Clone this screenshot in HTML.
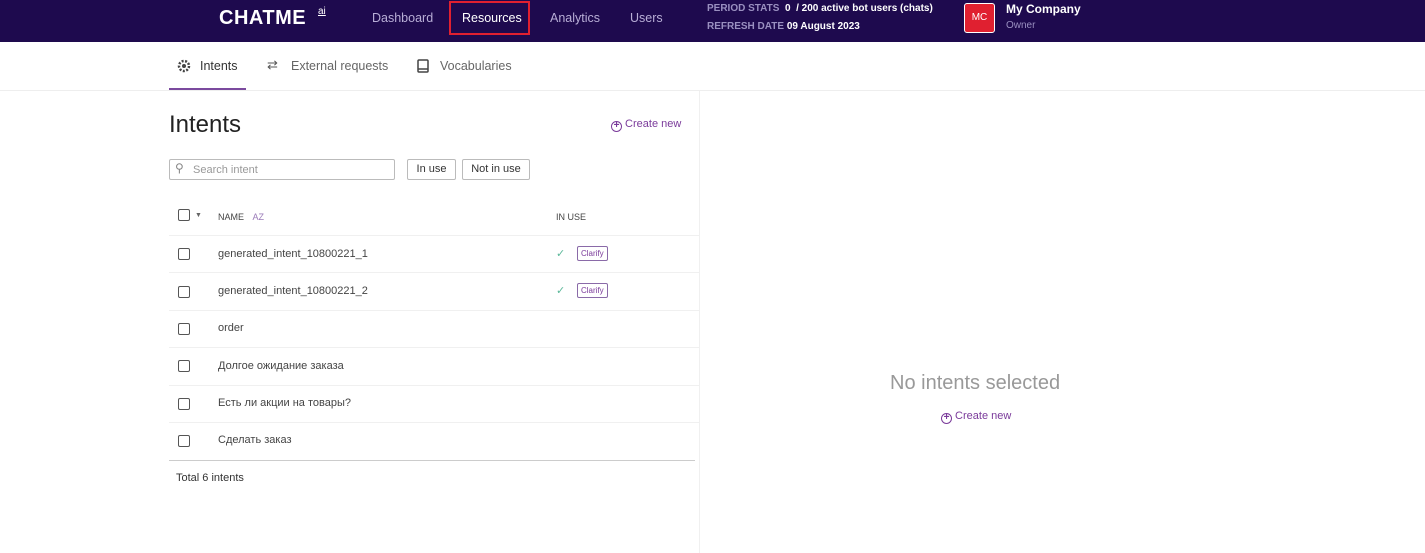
<!DOCTYPE html>
<html><head><meta charset="utf-8"><style>
*{margin:0;padding:0;box-sizing:border-box}
body{width:1425px;height:553px;background:#fff;font-family:"Liberation Sans",sans-serif;position:relative;overflow:hidden;color:#333}
.a{position:absolute;white-space:nowrap}
.nav{position:absolute;left:0;top:0;width:1425px;height:42px;background:#1e0a4e}
.navt{color:#b8aed6;font-size:12.5px}
.cb{position:absolute;width:12px;height:12px;border:1.5px solid #555;border-radius:2px}
.row{font-size:11px;color:#444}
.sep{position:absolute;left:169px;width:530px;height:1px;background:#f0f0f0}
.cl{position:absolute;font-size:8px;color:#7a3a9a;border:1px solid #8a6aa8;border-radius:2px;padding:1px 3px;line-height:11px}
.ck{position:absolute;color:#5cb89a;font-size:11px}
</style></head><body>
<div class="nav"></div>
<div class="a" style="left:219px;top:7px;color:#fff;font-size:20px;font-weight:bold;letter-spacing:0.5px">CHATME</div>
<div class="a" style="left:318px;top:6px;color:#fff;font-size:10px;text-decoration:underline">ai</div>
<div class="a navt" style="left:372px;top:11px">Dashboard</div>
<div class="a" style="left:449px;top:1px;width:81px;height:34px;border:2px solid #e02030"></div>
<div class="a" style="left:462px;top:11px;color:#fff;font-size:12.5px">Resources</div>
<div class="a navt" style="left:550px;top:11px">Analytics</div>
<div class="a navt" style="left:630px;top:11px">Users</div>
<div class="a" style="left:707px;top:3px;font-size:10px;color:#9a90c0;font-weight:bold">PERIOD STATS <span style="color:#fff">&nbsp;0 &nbsp;/ 200 active bot users (chats)</span></div>
<div class="a" style="left:707px;top:21px;font-size:10px;color:#9a90c0;font-weight:bold">REFRESH DATE <span style="color:#fff">09 August 2023</span></div>
<div class="a" style="left:964px;top:3px;width:31px;height:30px;background:#e02030;border:1.5px solid #fff;border-radius:3px;color:#fff;font-size:10px;text-align:center;line-height:27px">MC</div>
<div class="a" style="left:1006px;top:2px;color:#fff;font-size:12px;font-weight:bold">My Company</div>
<div class="a" style="left:1006px;top:20px;color:#9a90c0;font-size:10px">Owner</div>

<svg class="a" style="left:177px;top:59px" width="14" height="14" viewBox="0 0 14 14"><circle cx="7" cy="7" r="5" fill="none" stroke="#444" stroke-width="2.5" stroke-dasharray="2 1.5"/><circle cx="7" cy="7" r="2" fill="#444"/></svg>
<div class="a" style="left:200px;top:59px;font-size:12.5px;color:#333">Intents</div>
<div class="a" style="left:169px;top:88px;width:77px;height:3px;background:#7b4a9e"></div>
<div class="a" style="left:267px;top:57px;font-size:13px;color:#555">⇄</div>
<div class="a" style="left:291px;top:59px;font-size:12.5px;color:#666">External requests</div>
<svg class="a" style="left:417px;top:59px" width="12" height="14" viewBox="0 0 12 14"><rect x="1" y="1" width="10" height="12" rx="1" fill="none" stroke="#444" stroke-width="1.5"/><line x1="1" y1="10" x2="11" y2="10" stroke="#444" stroke-width="1.5"/></svg>
<div class="a" style="left:440px;top:59px;font-size:12.5px;color:#666">Vocabularies</div>
<div class="a" style="left:0;top:90px;width:1425px;height:1px;background:#eee"></div>
<div class="a" style="left:699px;top:91px;width:1px;height:462px;background:#f0f0f0"></div>

<div class="a" style="left:169px;top:111px;font-size:24px;color:#222">Intents</div>
<div class="a" style="left:611px;top:118px;font-size:11px;color:#7a3a9a"><span style="display:inline-block;width:11px;height:11px;border:1.5px solid #7a3a9a;border-radius:50%;text-align:center;line-height:8px;font-size:10px;font-weight:bold;vertical-align:-1px">+</span> Create new</div>

<div class="a" style="left:169px;top:159px;width:226px;height:21px;border:1px solid #bbb;border-radius:2px"></div>
<div class="a" style="left:175px;top:161px;font-size:12px;color:#888">⚲</div>
<div class="a" style="left:193px;top:164px;font-size:11px;color:#999">Search intent</div>
<div class="a" style="left:407px;top:159px;width:49px;height:21px;border:1px solid #bbb;border-radius:2px;font-size:11px;text-align:center;line-height:19px;color:#333">In use</div>
<div class="a" style="left:462px;top:159px;width:68px;height:21px;border:1px solid #bbb;border-radius:2px;font-size:11px;text-align:center;line-height:19px;color:#333">Not in use</div>

<div class="cb" style="left:178px;top:209px"></div>
<div class="a" style="left:195px;top:212px;font-size:7px;color:#666">▼</div>
<div class="a" style="left:218px;top:212px;font-size:9px;color:#444">NAME <span style="color:#9a7ab8;margin-left:6px">A͘Z</span></div>
<div class="a" style="left:556px;top:212px;font-size:9px;color:#444">IN USE</div>
<div class="sep" style="top:235px"></div>

<div class="cb" style="left:178px;top:248px"></div><div class="a row" style="left:218px;top:248px">generated_intent_10800221_1</div>
<div class="ck" style="left:556px;top:247px">✓</div><div class="cl" style="left:577px;top:246px">Clarify</div>
<div class="sep" style="top:272px"></div>
<div class="cb" style="left:178px;top:286px"></div><div class="a row" style="left:218px;top:285px">generated_intent_10800221_2</div>
<div class="ck" style="left:556px;top:284px">✓</div><div class="cl" style="left:577px;top:283px">Clarify</div>
<div class="sep" style="top:310px"></div>
<div class="cb" style="left:178px;top:323px"></div><div class="a row" style="left:218px;top:322px">order</div>
<div class="sep" style="top:347px"></div>
<div class="cb" style="left:178px;top:360px"></div><div class="a row" style="left:218px;top:360px">Долгое ожидание заказа</div>
<div class="sep" style="top:385px"></div>
<div class="cb" style="left:178px;top:398px"></div><div class="a row" style="left:218px;top:397px">Есть ли акции на товары?</div>
<div class="sep" style="top:422px"></div>
<div class="cb" style="left:178px;top:435px"></div><div class="a row" style="left:218px;top:434px">Сделать заказ</div>
<div class="a" style="left:169px;top:460px;width:526px;height:1px;background:#ccc"></div>
<div class="a" style="left:176px;top:472px;font-size:11px;color:#333">Total 6 intents</div>

<div class="a" style="left:890px;top:372px;font-size:20px;color:#999">No intents selected</div>
<div class="a" style="left:941px;top:410px;font-size:11px;color:#7a3a9a"><span style="display:inline-block;width:11px;height:11px;border:1.5px solid #7a3a9a;border-radius:50%;text-align:center;line-height:8px;font-size:10px;font-weight:bold;vertical-align:-1px">+</span> Create new</div>
</body></html>
